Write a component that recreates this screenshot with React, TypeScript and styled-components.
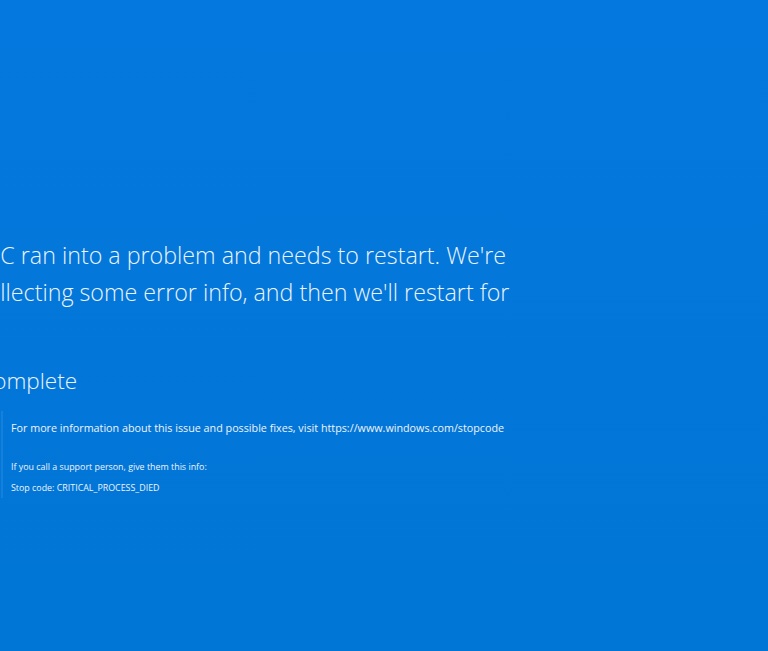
import styled, { createGlobalStyle } from "styled-components";

const Global = createGlobalStyle`
  html, body {
    margin: 0;
    padding: 0;
    background: #0477dc;
  }
`;

const Screen = styled.div`
  width: 768px;
  height: 651px;
  overflow: hidden;
  background: linear-gradient(180deg, #0478de 0%, #0377da 40%, #0076d6 100%);
  color: #eef4fc;
  font-family: "Open Sans", "Noto Sans", sans-serif;
`;

const Content = styled.div`
  margin-left: -68px;
  padding-top: 237px;
`;

const Message = styled.p`
  margin: 0;
  font-size: 23.25px;
  font-weight: 300;
  line-height: 37px;
  white-space: nowrap;
`;

const Progress = styled.p`
  margin: 14px 0 0;
  text-indent: -12px;
  font-size: 22.5px;
  font-weight: 300;
  line-height: 37px;
`;

const InfoRow = styled.div`
  display: flex;
  gap: 8px;
  margin-top: 21px;
`;

const QrCode = styled.div`
  width: 69px;
  height: 87px;
  margin-top: -9px;
  flex-shrink: 0;
  border-right: 2px solid rgba(255, 255, 255, 0.08);
`;

const InfoText = styled.div`
  display: flex;
  flex-direction: column;
`;

const MoreInfo = styled.p`
  margin: 0;
  font-size: 10.75px;
  line-height: 16px;
`;

const Support = styled.p<{ $top: number }>`
  margin: ${(p) => p.$top}px 0 0;
  font-size: 8.9px;
  line-height: 12px;
`;

export default function App() {
  return (
    <>
      <Global />
      <Screen>
        <Content>
          <Message>
            Your PC ran into a problem and needs to restart. We're
            <br />
            just collecting some error info, and then we'll restart for
            <br />
            you.
          </Message>
          <Progress>100% complete</Progress>
          <InfoRow>
            <QrCode />
            <InfoText>
              <MoreInfo>
                For more information about this issue and possible fixes, visit
                https://www.windows.com/stopcode
              </MoreInfo>
              <Support $top={25}>
                If you call a support person, give them this info:
              </Support>
              <Support $top={9}>Stop code: CRITICAL_PROCESS_DIED</Support>
            </InfoText>
          </InfoRow>
        </Content>
      </Screen>
    </>
  );
}
